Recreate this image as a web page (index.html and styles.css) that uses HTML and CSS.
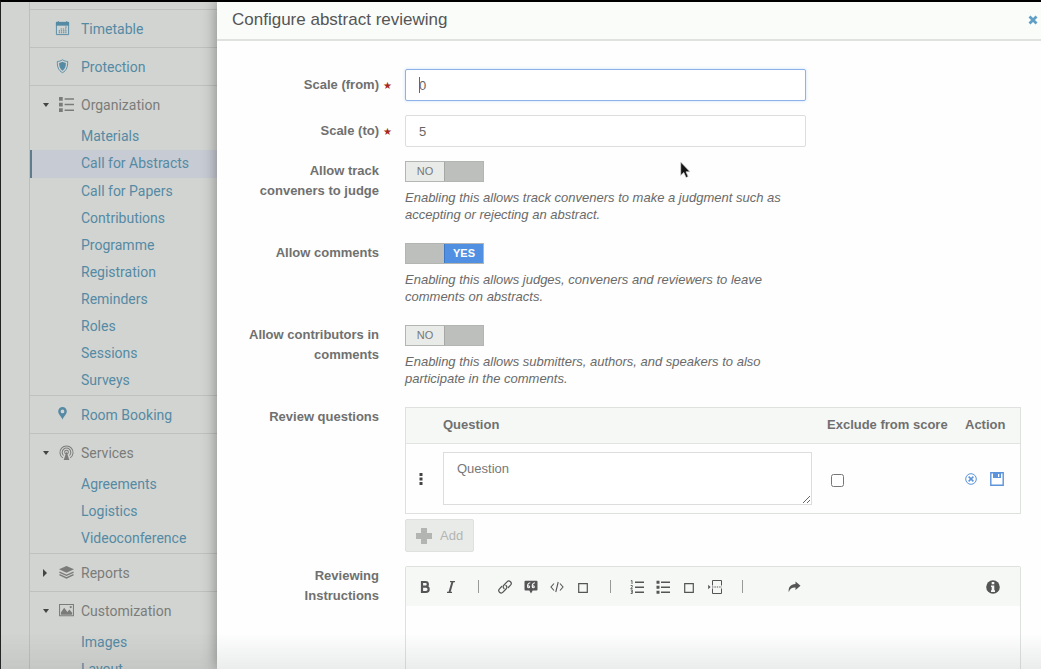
FILE: index.html
```html
<!DOCTYPE html>
<html lang="en">
<head>
<meta charset="utf-8">
<title>Configure abstract reviewing</title>
<link rel="stylesheet" href="styles.css">
</head>
<body>
<div class="app">
  <nav class="sidebar" aria-label="Event management">
    <section class="group">
      <a class="head" href="#"><span class="caret"></span>
        <svg class="icon shift" viewBox="0 0 16 16"><path d="M1.500 1.500h13v13h-13z" fill="none" stroke="currentColor"/><path d="M1 1h14v4H1z" fill="currentColor"/><path d="M3.500 0v3M12.500 0v3" stroke="currentColor"/><path d="M4 12.500h9M4 10.500h9M6 8.500h7M11 6.500h2" stroke="currentColor" stroke-width="1.200" stroke-dasharray="1.400 .9"/></svg>
        <span>Timetable</span></a>
    </section>
    <section class="group">
      <a class="head" href="#"><span class="caret"></span>
        <svg class="icon shift" viewBox="0 0 16 16"><path d="M8 .8c2 1.400 3.700 1.800 5.500 1.800.2 5.500-1 9.500-5.500 12-4.500-2.500-5.700-6.500-5.500-12C4.300 2.600 6 2.200 8 .8z" fill="none" stroke="currentColor"/><path d="M8 3c1.200.8 2.400 1.100 3.600 1.200 0 3.700-.9 6.300-3.600 8.200-2.700-1.900-3.600-4.500-3.600-8.200C5.600 4.100 6.800 3.800 8 3z" fill="currentColor"/></svg>
        <span>Protection</span></a>
    </section>
    <section class="group">
      <button class="head muted" type="button"><span class="caret down"></span>
        <svg class="icon" viewBox="0 0 16 16"><path d="M0 0h4v4H0zM0 6h4v4H0zM0 12h4v4H0z" fill="currentColor"/><path d="M6 2h10M6 8h10M6 14h10" stroke="currentColor" stroke-width="1.600"/></svg>
        <span>Organization</span></button>
      <ul class="items">
        <li><a href="#">Materials</a></li>
        <li class="active"><a href="#">Call for Abstracts</a></li>
        <li><a href="#">Call for Papers</a></li>
        <li><a href="#">Contributions</a></li>
        <li><a href="#">Programme</a></li>
        <li><a href="#">Registration</a></li>
        <li><a href="#">Reminders</a></li>
        <li><a href="#">Roles</a></li>
        <li><a href="#">Sessions</a></li>
        <li><a href="#">Surveys</a></li>
      </ul>
    </section>
    <section class="group">
      <a class="head" href="#"><span class="caret"></span>
        <svg class="icon shift" viewBox="0 0 16 16"><path d="M8 0a4.600 4.600 0 0 0-4.600 4.600C3.400 8.300 7 10 8 13.500 9 10 12.600 8.300 12.600 4.600A4.600 4.600 0 0 0 8 0zm0 2.700a2 2 0 1 1 0 4 2 2 0 0 1 0-4z" fill="currentColor"/></svg>
        <span>Room Booking</span></a>
    </section>
    <section class="group">
      <button class="head muted" type="button"><span class="caret down"></span>
        <svg class="icon" viewBox="0 0 16 16"><g fill="none" stroke="currentColor" stroke-width="1.100"><path d="M4 13.700a7 7 0 1 1 8 0M4.800 11.200a4.600 4.600 0 1 1 6.400 0"/><circle cx="8" cy="7.500" r="2"/></g><path d="M8 7l3 9H5z" fill="currentColor"/></svg>
        <span>Services</span></button>
      <ul class="items">
        <li><a href="#">Agreements</a></li>
        <li><a href="#">Logistics</a></li>
        <li><a href="#">Videoconference</a></li>
      </ul>
    </section>
    <section class="group">
      <button class="head muted" type="button"><span class="caret right"></span>
        <svg class="icon" viewBox="0 0 16 16"><path d="M8 1l8 3.600-8 3.700L0 4.600z" fill="currentColor"/><path d="M.5 7.500L8 11l7.500-3.500M.5 10.300L8 13.800l7.500-3.500" fill="none" stroke="currentColor" stroke-width="1.500"/></svg>
        <span>Reports</span></button>
    </section>
    <section class="group">
      <button class="head muted" type="button"><span class="caret down"></span>
        <svg class="icon" viewBox="0 0 16 16"><path d="M.6 1.600h14.800v12H.6z" fill="none" stroke="currentColor" stroke-width="1.100"/><path d="M2 12.500V10l3.500-5L9 9.500 11 7l3 3.500v2z" fill="currentColor"/><circle cx="12.500" cy="4.300" r="1.200" fill="currentColor"/></svg>
        <span>Customization</span></button>
      <ul class="items">
        <li><a href="#">Images</a></li>
        <li><a href="#">Layout</a></li>
      </ul>
    </section>
  </nav>

  <main class="dialog" role="dialog" aria-labelledby="dialog-title">
    <header class="dialog-header">
      <h1 id="dialog-title">Configure abstract reviewing</h1>
      <button class="close" type="button" aria-label="Close"><svg viewBox="0 0 10 10"><path d="M1.500 1.500l7 7M8.500 1.500l-7 7" stroke="currentColor" stroke-width="2.800"/></svg></button>
    </header>
    <form class="form">
      <div class="row middle">
        <label class="label" for="from">Scale (from)</label><span class="star">★</span>
        <div class="field text-wrap"><input class="text focused" id="from" type="text" value="0"><span class="text-caret"></span></div>
      </div>
      <div class="row middle">
        <label class="label" for="to">Scale (to)</label><span class="star">★</span>
        <div class="field"><input class="text" id="to" type="text" value="5"></div>
      </div>
      <div class="row">
        <label class="label" for="judge">Allow track conveners to judge</label>
        <div class="field">
          <label class="toggle"><input id="judge" type="checkbox"><span class="off">NO</span><span class="on">YES</span></label>
          <p class="help">Enabling this allows track conveners to make a judgment such as accepting or rejecting an abstract.</p>
        </div>
      </div>
      <div class="row">
        <label class="label" for="comments">Allow comments</label>
        <div class="field">
          <label class="toggle"><input id="comments" type="checkbox" checked><span class="off">NO</span><span class="on">YES</span></label>
          <p class="help">Enabling this allows judges, conveners and reviewers to leave comments on abstracts.</p>
        </div>
      </div>
      <div class="row">
        <label class="label" for="contributors">Allow contributors in comments</label>
        <div class="field">
          <label class="toggle"><input id="contributors" type="checkbox"><span class="off">NO</span><span class="on">YES</span></label>
          <p class="help">Enabling this allows submitters, authors, and speakers to also participate in the comments.</p>
        </div>
      </div>
      <div class="row">
        <label class="label" for="question">Review questions</label>
        <div class="field">
          <table class="questions">
            <thead><tr><th class="drag"></th><th>Question</th><th class="exclude">Exclude from score</th><th class="action">Action</th></tr></thead>
            <tbody><tr>
              <td class="drag"><svg viewBox="0 0 4 12"><path d="M.5 0h3v3h-3zM.5 4.500h3v3h-3zM.5 9h3v3h-3z" fill="currentColor"/></svg></td>
              <td><textarea id="question" placeholder="Question"></textarea></td>
              <td class="exclude"><input type="checkbox" aria-label="Exclude from score"></td>
              <td class="action"><div class="actions">
                <button type="button" aria-label="Cancel"><svg viewBox="0 0 12 12"><circle cx="6" cy="6" r="5.300" fill="none" stroke="currentColor"/><path d="M3.600 3.600l4.800 4.800M8.400 3.600L3.600 8.400" stroke="currentColor" stroke-width="1.500"/></svg></button>
                <button class="save" type="button" aria-label="Save"><svg viewBox="0 0 14 14"><path d="M.8.8h12.400v12.400H.8z" fill="none" stroke="currentColor" stroke-width="1.400"/><path d="M3 1h8v5H3z" fill="currentColor"/><path d="M8 2h1.300v3H8z" fill="#fff"/></svg></button>
              </div></td>
            </tr></tbody>
          </table>
          <button class="add" type="button" disabled><svg viewBox="0 0 16 16"><path d="M5 0h6v5h5v6h-5v5H5v-5H0V5h5z" fill="currentColor"/></svg>Add</button>
        </div>
      </div>
      <div class="row editor-row">
        <label class="label" for="instructions">Reviewing Instructions</label>
        <div class="field editor">
          <div class="toolbar">
            <button type="button" aria-label="Bold"><svg viewBox="0 0 14 14"><path d="M4 2h3.500a2.300 2.300 0 0 1 0 4.700H4zM4 6.700h4a2.600 2.600 0 0 1 0 5.300H4z" fill="none" stroke="currentColor" stroke-width="2.200"/></svg></button>
            <button type="button" aria-label="Italic"><svg viewBox="0 0 14 14"><path d="M6 1.600h5M3 12.400h5" stroke="currentColor" stroke-width="1.200"/><path d="M8.600 1.500l-3.200 11" stroke="currentColor" stroke-width="2"/></svg></button>
            <i class="sep"></i>
            <button type="button" aria-label="Link"><svg viewBox="0 0 14 14"><g fill="none" stroke="currentColor" stroke-width="1.200" stroke-linecap="round"><path d="M6 8.500a2.500 2.500 0 0 1 0-3.500l3-3.200a2.400 2.400 0 0 1 3.500 3.400L10.300 7.500"/><path d="M8 5.500a2.500 2.500 0 0 1 0 3.500l-3 3.200a2.400 2.400 0 0 1-3.500-3.400l2.200-2.300"/></g></svg></button>
            <button type="button" aria-label="Quote"><svg viewBox="0 0 14 14"><path d="M1.500.7h11a1 1 0 0 1 1 1v7.800a1 1 0 0 1-1 1H8.700L7 13.500 5.300 10.500H1.500a1 1 0 0 1-1-1V1.700a1 1 0 0 1 1-1z" fill="currentColor"/><g fill="none" stroke="#f6f8f6" stroke-width="1.100"><path d="M6.300 2.700C4.300 2.900 3.500 4 3.500 6.500M11 2.700C9 2.900 8.200 4 8.200 6.500"/><circle cx="4.600" cy="6.700" r="1"/><circle cx="9.300" cy="6.700" r="1"/></g></svg></button>
            <button type="button" aria-label="Code"><svg viewBox="0 0 14 14"><path d="M4 3.500L1 7l3 3.500M10 3.500L13 7l-3 3.500M8.200 2L5.800 12" fill="none" stroke="currentColor" stroke-width="1.100"/></svg></button>
            <button type="button" aria-label="Image"><svg viewBox="0 0 14 14"><path d="M2.700 3.700h8.600v8.600H2.700z" fill="none" stroke="currentColor" stroke-width="1.200"/></svg></button>
            <i class="sep"></i>
            <button type="button" aria-label="Numbered list"><svg viewBox="0 0 14 14"><path d="M5 2.200h9M5 7.200h9M5 12.200h9" stroke="currentColor" stroke-width="1.400"/><path d="M.8 1L2 .4V4M.7 5.500h1.600v1.300L.8 8.700h1.900M.7 10h1.600v3.500H.7M1 11.800h1.300" fill="none" stroke="currentColor" stroke-width=".9"/></svg></button>
            <button type="button" aria-label="Bulleted list"><svg viewBox="0 0 14 14"><path d="M.5.700h3v3h-3zM.5 5.700h3v3h-3zM.5 10.700h3v3h-3z" fill="currentColor"/><path d="M5 2.200h9M5 7.200h9M5 12.200h9" stroke="currentColor" stroke-width="1.400"/></svg></button>
            <button type="button" aria-label="Heading"><svg viewBox="0 0 14 14"><path d="M2.700 3.700h8.600v8.600H2.700z" fill="none" stroke="currentColor" stroke-width="1.200"/></svg></button>
            <button type="button" aria-label="Page break"><svg viewBox="0 0 14 14"><path d="M4.500 5.500v-5h9v5M4.500 8.500v5h9v-5" fill="none" stroke="currentColor"/><path d="M4 7h10" stroke="currentColor" stroke-dasharray="1.400 1"/><path d="M.2 4.800L2.600 7 .2 9.200z" fill="currentColor"/></svg></button>
            <i class="sep"></i>
            <button class="redo" type="button" aria-label="Redo"><svg viewBox="0 0 14 14"><path d="M8.500 1.500l5 4.300-5 4.200V7.600C5 7.400 3 8.500 1.800 12.300 1 7.500 3.500 4.200 8.500 4z" fill="currentColor"/></svg></button>
            <button class="info" type="button" aria-label="Help"><svg viewBox="0 0 14 14"><circle cx="7" cy="7" r="6.800" fill="currentColor"/><path d="M5.700 2h2.600v2.200H5.700zM5 5.500h3.300v4.800H9V12H5v-1.700h.7V7H5z" fill="#f6f8f6"/></svg></button>
          </div>
          <textarea id="instructions"></textarea>
        </div>
      </div>
    </form>
  </main>
</div>
<svg class="pointer" viewBox="0 0 12 18" aria-hidden="true"><path d="M.7 1v13.500l3.100-3L6 16.600l2.200-1-2.200-4.800h4z" fill="#151515" stroke="#ddd" stroke-width=".7"/></svg>
</body>
</html>
```
FILE: styles.css
```css
* { box-sizing: border-box; }
body {
  margin: 0;
  height: 100vh;
  overflow: hidden;
  border-top: 2px solid #000;
  border-left: 1px solid #222;
  background: #d2d4d1;
  color: #666;
  font-family: "Liberation Sans", Arial, sans-serif;
}
body::after {
  content: "";
  position: fixed;
  inset: auto 0 0;
  height: 36px;
  background: linear-gradient(transparent, rgba(90, 100, 100, .11));
  pointer-events: none;
}
button { padding: 0; border: 0; background: none; color: inherit; font: inherit; }
svg { display: block; }
.app { display: flex; height: 100%; }

.sidebar {
  flex: 0 0 188px;
  margin-left: 28px;
  padding-top: 7px;
  border-left: 1px solid #bcbfbc;
  overflow: hidden;
  font-family: Roboto, sans-serif;
  font-size: 14px;
  color: #558aa4;
}
.sidebar a { color: inherit; text-decoration: none; }
.group { border-top: 1px solid #bfc1be; }
.head {
  display: flex;
  align-items: center;
  width: 100%;
  height: 37px;
  padding-left: 11px;
}
.muted { color: #7b7c7a; }
.caret { width: 10px; margin-right: 8px; }
.caret::before { content: ""; display: block; width: 0; }
.caret.down::before { margin-left: 2px; border: 3px solid transparent; border-top: 4px solid #444; border-bottom: 0; }
.caret.right::before { margin-left: 2px; border: 4px solid transparent; border-left: 4px solid #444; border-right: 0; }
.icon { width: 15px; height: 15px; margin-right: 7px; }
.icon.shift { margin-left: -4px; margin-right: 11px; }
.items { margin: 0; padding: 0 0 1px; list-style: none; }
.items a { display: block; padding-left: 51px; line-height: 27px; }
.items .active { padding-bottom: 1px; background: #c7cbd3; box-shadow: inset 2px 0 #5f7c8c; }

.dialog {
  position: relative;
  flex: 1;
  min-width: 0;
  overflow: hidden;
  background: #fdfefd;
  box-shadow: 0 0 14px rgba(0, 0, 0, .4);
}
.dialog-header {
  display: flex;
  align-items: center;
  justify-content: space-between;
  height: 39px;
  padding: 0 3px 2px 15px;
  border-bottom: 2px solid #e0e2e0;
  background: #fafcfa;
}
.dialog-header h1 { margin: 0; font-size: 17px; font-weight: 400; color: #555; }
.close { color: #5f9fc5; }
.close svg { width: 10px; height: 10px; }

.form { display: grid; gap: 14px; padding: 28px 20px 0 30px; font-size: 13px; }
.row { display: grid; grid-template-columns: 132px 26px minmax(0, 1fr); align-items: start; }
.row.middle { align-items: center; }
.label { grid-column: 1; line-height: 20px; font-weight: 700; text-align: right; color: #707070; }
.star { padding-left: 4px; font-family: "DejaVu Sans", sans-serif; font-size: 10px; color: #a8281c; }
.field { grid-column: 3; }
.text {
  display: block;
  width: 401px;
  max-width: 100%;
  height: 32px;
  padding: 0 13px;
  border: 1px solid #ddd;
  border-radius: 2px;
  background: #fff;
  color: #666;
  font: inherit;
  outline: 0;
}
.text.focused { border-color: #8db1e8; box-shadow: 0 0 3px #c5ddf7; }
.text-wrap { position: relative; }
.text-caret { position: absolute; left: 14px; top: 8px; width: 1px; height: 16px; background: #666; }

.toggle { position: relative; display: flex; width: 79px; height: 21px; border: 1px solid #b3b5b3; background: #bdbfbd; font-size: 11px; }
.toggle input { position: absolute; inset: 0; margin: 0; opacity: 0; }
.toggle span { flex: 1; line-height: 18px; text-align: center; color: transparent; }
.toggle .on { border-left: 1px solid #a5a7a5; }
.toggle input:not(:checked) ~ .off { background: #e9ebe9; color: #777; }
.toggle input:checked ~ .on { background: #518fe2; border-color: #3d78c5; color: #fff; font-weight: 700; }
.help { max-width: 401px; margin: 7px 0 6px; line-height: 17px; font-style: italic; color: #6a6a6a; }

.questions { width: 100%; border: 1px solid #dfe1df; border-spacing: 0; border-collapse: separate; }
.questions th { height: 36px; padding: 0 0 2px; background: #f6f8f6; border-bottom: 1px solid #e2e4e2; text-align: left; color: #707070; }
.questions td { height: 69px; padding: 0; }
.questions .drag { width: 37px; }
.drag svg { width: 4px; height: 12px; margin-left: 13px; color: #444; }
.questions textarea {
  display: block;
  width: calc(100% - 15px);
  height: 53px;
  padding: 8px 13px;
  border: 1px solid #ddd;
  background: #fff;
  font: inherit;
}
.questions textarea::placeholder { color: #777; }
.questions .exclude { width: 138px; }
.questions .action { width: 55px; }
.exclude input { display: block; width: 13px; height: 13px; margin: 4px 0 0 4px; }
.actions { display: flex; align-items: center; gap: 13px; color: #5d93db; }
.actions svg { width: 12px; height: 12px; }
.actions .save svg { width: 14px; height: 14px; }
.add {
  display: flex;
  align-items: center;
  gap: 8px;
  height: 33px;
  margin-top: 5px;
  padding: 0 10px;
  border: 1px solid #dfe1df;
  border-radius: 2px;
  background: #e9ebe9;
  color: #b3b5b3;
}
.add svg { width: 16px; height: 16px; }

.editor { height: 180px; border: 1px solid #dfe1df; border-radius: 2px; }
.toolbar { display: flex; align-items: center; height: 39px; padding: 0 14px 0 6px; background: #f6f8f6; color: #555; }
.toolbar button { display: grid; place-items: center; width: 26px; height: 26px; }
.toolbar svg { width: 14px; height: 14px; }
.sep { width: 28px; height: 13px; background: linear-gradient(#999, #999) center / 1px 100% no-repeat; }
.toolbar .redo { margin-left: 25px; }
.toolbar .info { margin-left: auto; }
.editor textarea { display: block; width: 100%; height: 139px; border: 0; background: transparent; resize: none; }

.pointer { position: absolute; left: 680px; top: 161px; width: 12px; height: 18px; }
```
